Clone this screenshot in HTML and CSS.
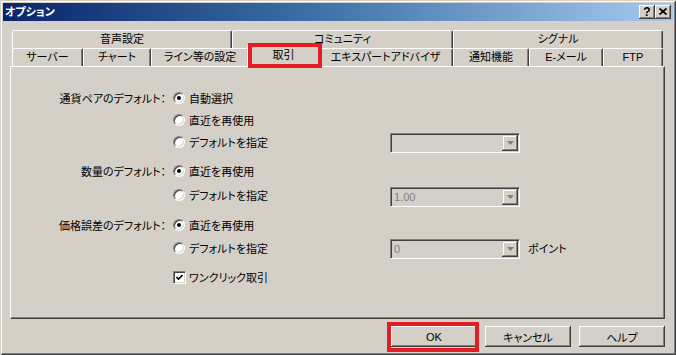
FILE: index.html
```html
<!DOCTYPE html>
<html lang="ja">
<head>
<meta charset="utf-8">
<title>オプション</title>
<link rel="stylesheet" href="styles.css">
</head>
<body>
<div class="window">
  <div class="titlebar">
    <span class="title">オプション</span>
    <div class="tb-buttons">
      <span class="tb-btn help">?</span>
      <span class="tb-btn close"><svg width="8" height="7" viewBox="0 0 8 7"><path d="M0.5 0.5 L7.5 6.5 M7.5 0.5 L0.5 6.5" stroke="#000" stroke-width="1.7" fill="none"/></svg></span>
    </div>
  </div>
  <div class="client">
    <div class="tabs">
      <div class="tab-row">
        <div class="tab t-voice">音声設定</div>
        <div class="tab t-comm">コミュニティ</div>
        <div class="tab t-signal">シグナル</div>
      </div>
      <div class="tab-row">
        <div class="tab t-server">サーバー</div>
        <div class="tab t-chart">チャート</div>
        <div class="tab t-line">ライン等の設定</div>
        <div class="tab t-trade active">取引</div>
        <div class="tab t-ea">エキスパートアドバイザ</div>
        <div class="tab t-notify">通知機能</div>
        <div class="tab t-mail">E-メール</div>
        <div class="tab t-ftp">FTP</div>
      </div>
    </div>
    <div class="panel">
      <div class="form">
        <div class="row">
          <span class="label">通貨ペアのデフォルト：</span>
          <span class="opt"><span class="radio on"></span>自動選択</span>
        </div>
        <div class="row">
          <span class="label"></span>
          <span class="opt"><span class="radio"></span>直近を再使用</span>
        </div>
        <div class="row">
          <span class="label"></span>
          <span class="opt"><span class="radio"></span>デフォルトを指定</span>
          <span class="combo"><span class="combo-text"></span><span class="combo-btn"><svg width="7" height="4" viewBox="0 0 7 4"><path d="M0 0 H7 L3.5 4 Z" fill="#808080"/></svg></span></span>
        </div>
        <div class="row tall gap">
          <span class="label">数量のデフォルト：</span>
          <span class="opt"><span class="radio on"></span>直近を再使用</span>
        </div>
        <div class="row tall">
          <span class="label"></span>
          <span class="opt"><span class="radio"></span>デフォルトを指定</span>
          <span class="combo"><span class="combo-text">1.00</span><span class="combo-btn"><svg width="7" height="4" viewBox="0 0 7 4"><path d="M0 0 H7 L3.5 4 Z" fill="#808080"/></svg></span></span>
        </div>
        <div class="row tall gap">
          <span class="label">価格誤差のデフォルト：</span>
          <span class="opt"><span class="radio on"></span>直近を再使用</span>
        </div>
        <div class="row">
          <span class="label"></span>
          <span class="opt"><span class="radio"></span>デフォルトを指定</span>
          <span class="combo"><span class="combo-text">0</span><span class="combo-btn"><svg width="7" height="4" viewBox="0 0 7 4"><path d="M0 0 H7 L3.5 4 Z" fill="#808080"/></svg></span></span>
          <span class="unit">ポイント</span>
        </div>
        <div class="row gap-check">
          <span class="label"></span>
          <span class="opt"><span class="check"><svg width="7" height="7" viewBox="0 0 7 7"><path d="M0.5 3 L2.5 5 L6.5 1" stroke="#000" stroke-width="1.6" fill="none"/></svg></span>ワンクリック取引</span>
        </div>
      </div>
    </div>
    <div class="buttons">
      <button class="btn">OK</button>
      <button class="btn">キャンセル</button>
      <button class="btn">ヘルプ</button>
    </div>
  </div>
  <div class="mark mark-tab"></div>
  <div class="mark mark-ok"></div>
</div>
</body>
</html>
```

FILE: styles.css
```css
html, body {
  margin: 0;
  padding: 0;
  background: #d4d0c8;
}

body {
  font: 11px "Liberation Sans", "Noto Sans CJK JP", sans-serif;
  font-feature-settings: "palt" 1;
  color: #000;
}

.window {
  position: relative;
  width: 676px;
  height: 355px;
  box-sizing: border-box;
  padding: 3px;
  display: flex;
  flex-direction: column;
  background: #d4d0c8;
  box-shadow: inset 1px 1px #d4d0c8, inset -1px -1px #404040,
              inset 2px 2px #fff, inset -2px -2px #808080;
}

.titlebar {
  flex: none;
  height: 18px;
  display: flex;
  align-items: center;
  justify-content: space-between;
  padding: 0 2px 0 2px;
  background: linear-gradient(90deg, #0a246a 0%, #3a6ea5 45%, #a6caf0 100%);
}

.title {
  color: #fff;
  font-weight: bold;
  font-size: 11px;
  line-height: 18px;
}

.tb-buttons {
  display: flex;
}

.tb-btn {
  width: 16px;
  height: 14px;
  box-sizing: border-box;
  background: #d4d0c8;
  box-shadow: inset -1px -1px #404040, inset 1px 1px #fff, inset -2px -2px #808080;
  display: flex;
  align-items: center;
  justify-content: center;
}

.tb-btn.help {
  font: bold 12px "Liberation Sans", sans-serif;
  line-height: 14px;
  padding-bottom: 1px;
}

.tb-btn.close svg {
  display: block;
  margin-top: -1px;
}

.client {
  flex: 1;
  display: flex;
  flex-direction: column;
  padding: 9px 8px 0 7px;
}

.tabs {
  margin: 0 2px;
}

.tab-row {
  display: flex;
  height: 18px;
}

.tab {
  flex: none;
  box-sizing: border-box;
  background: #d4d0c8;
  border-top: 1px solid #fff;
  border-left: 1px solid #fff;
  border-right: 1px solid #404040;
  border-radius: 2px 2px 0 0;
  box-shadow: inset -1px 0 #808080;
  text-align: center;
  line-height: 17px;
  white-space: nowrap;
}

.t-voice { width: 220px; }
.t-comm { width: 221px; }
.t-signal { width: 210px; }

.t-server { width: 71px; }
.t-chart { width: 68px; }
.t-line { width: 98px; }
.t-trade { width: 69px; }
.t-ea { width: 135px; }
.t-notify { width: 76px; }
.t-mail { width: 74px; }
.t-ftp { width: 60px; }

.tab.active {
  width: 73px;
  margin: -2px -2px -1px -2px;
  position: relative;
  z-index: 1;
}

.panel {
  height: 253px;
  box-sizing: border-box;
  border: 1px solid;
  border-color: #fff #404040 #404040 #fff;
  box-shadow: inset -1px -1px #808080;
}

.form {
  padding-top: 20px;
  display: flex;
  flex-direction: column;
}

.row {
  display: grid;
  grid-template-columns: 159px 220px 130px auto;
  align-items: center;
  height: 22px;
}

.row.tall {
  height: 24px;
}

.row.gap {
  margin-top: 6px;
}

.row.gap-check {
  margin-top: 7px;
}

.label {
  text-align: right;
  padding-right: 4px;
  white-space: nowrap;
}

.opt {
  display: flex;
  align-items: center;
  margin-left: 3px;
  white-space: nowrap;
}

.radio {
  flex: none;
  position: relative;
  width: 12px;
  height: 12px;
  box-sizing: border-box;
  border-radius: 50%;
  border: 1px solid;
  border-color: #808080 #fff #fff #808080;
  box-shadow: inset 1px 1px #404040, inset -1px -1px #d4d0c8;
  background: #fff;
  margin-right: 4px;
}

.radio.on::after {
  content: "";
  position: absolute;
  left: 3px;
  top: 3px;
  width: 4px;
  height: 4px;
  border-radius: 50%;
  background: #000;
}

.check {
  flex: none;
  width: 13px;
  height: 13px;
  box-sizing: border-box;
  border: 1px solid;
  border-color: #808080 #fff #fff #808080;
  box-shadow: inset 1px 1px #404040, inset -1px -1px #d4d0c8;
  background: #fff;
  display: flex;
  align-items: center;
  justify-content: center;
  margin-right: 3px;
}

.check svg {
  display: block;
}

.combo {
  align-self: end;
  height: 20px;
  box-sizing: border-box;
  border: 1px solid;
  border-color: #808080 #fff #fff #808080;
  box-shadow: inset 1px 1px #404040, inset -1px -1px #d4d0c8;
  background: #d4d0c8;
  display: flex;
  align-items: center;
  justify-content: space-between;
  padding: 1px 1px 1px 3px;
}

.combo-text {
  color: #808080;
}

.combo-btn {
  width: 16px;
  height: 16px;
  box-sizing: border-box;
  background: #d4d0c8;
  box-shadow: inset -1px -1px #404040, inset 1px 1px #d4d0c8,
              inset -2px -2px #808080, inset 2px 2px #fff;
  display: flex;
  align-items: center;
  justify-content: center;
}

.combo-btn svg {
  display: block;
}

.unit {
  margin-left: 8px;
  white-space: nowrap;
}

.buttons {
  display: flex;
  justify-content: flex-end;
  gap: 8px;
  margin-top: 7px;
}

.btn {
  width: 86px;
  height: 21px;
  padding: 0;
  border: none;
  background: #d4d0c8;
  font: inherit;
  color: #000;
  box-shadow: inset -1px -1px #404040, inset 1px 1px #fff, inset -2px -2px #808080;
}

.mark {
  position: absolute;
  z-index: 5;
  box-sizing: border-box;
  border: 4px solid #e21d25;
}

.mark-tab {
  left: 248px;
  top: 43px;
  width: 74px;
  height: 25px;
}

.mark-ok {
  left: 387px;
  top: 322px;
  width: 92px;
  height: 30px;
}
```
